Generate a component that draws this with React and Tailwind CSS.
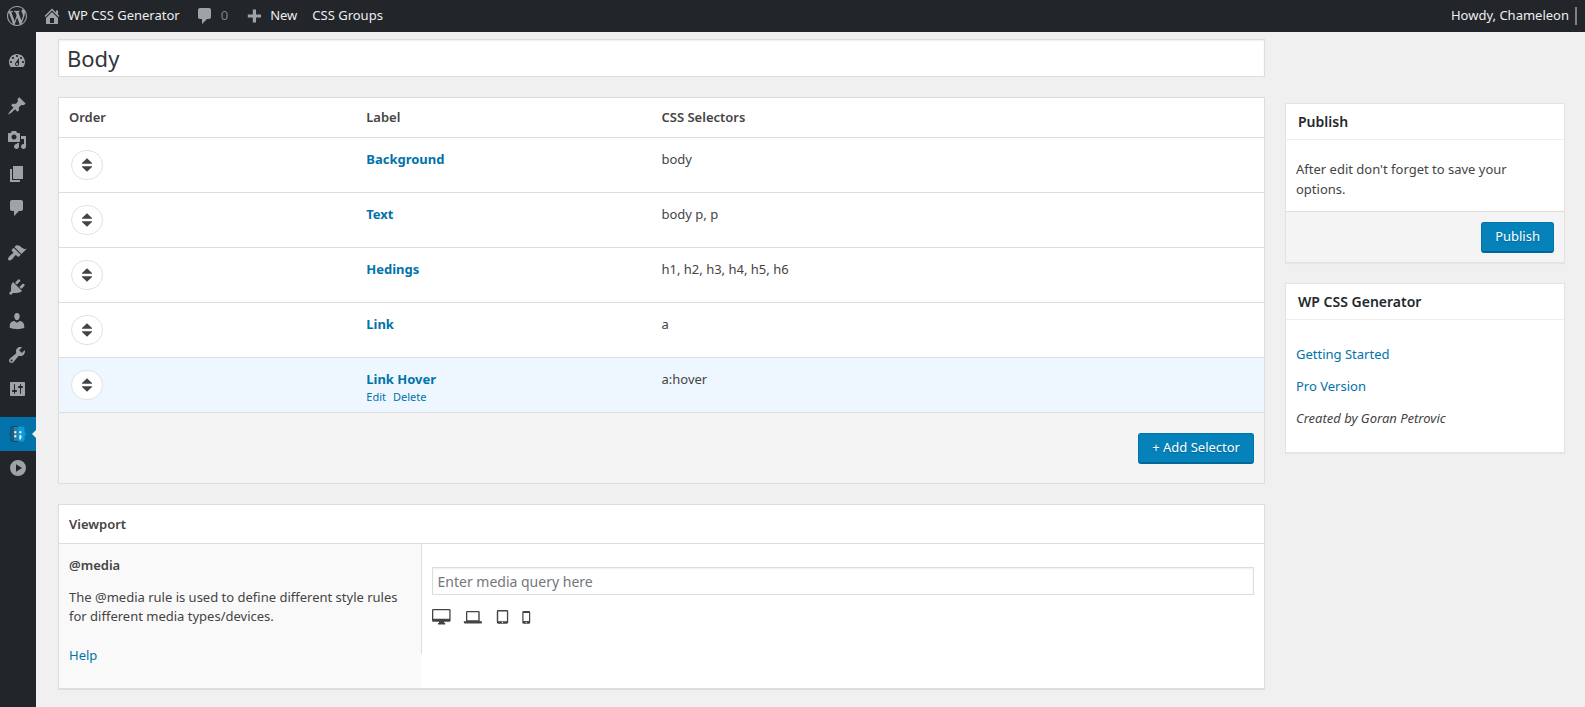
import React from "react";

const ICONS = {
  wordpress:
    "M20 10c0-5.51-4.49-10-10-10C4.48 0 0 4.49 0 10c0 5.52 4.48 10 10 10 5.51 0 10-4.48 10-10zM7.78 15.37L4.37 6.22c.55-.02 1.17-.08 1.17-.08.5-.06.44-1.13-.06-1.11 0 0-1.45.11-2.37.11-.18 0-.37 0-.58-.01C4.12 2.69 6.87 1.11 10 1.11c2.33 0 4.45.87 6.05 2.34-.68-.11-1.65.39-1.65 1.58 0 .74.45 1.36.9 2.1.35.61.55 1.36.55 2.46 0 1.49-1.4 5-1.4 5l-3.03-8.37c.54-.02.82-.17.82-.17.5-.05.44-1.25-.06-1.22 0 0-1.44.12-2.38.12-.87 0-2.33-.12-2.33-.12-.5-.03-.56 1.2-.06 1.22l.92.08 1.26 3.41zM17.41 10c.24-.64.74-1.87.43-4.25.7 1.29 1.05 2.71 1.05 4.25 0 3.29-1.73 6.24-4.4 7.78.97-2.59 1.94-5.2 2.92-7.78zM6.1 18.09C3.12 16.65 1.11 13.53 1.11 10c0-1.3.23-2.48.72-3.59C3.25 10.3 4.67 14.2 6.1 18.09zm4.03-6.63l2.58 6.98c-.86.29-1.76.45-2.71.45-.79 0-1.57-.11-2.29-.33.81-2.38 1.62-4.74 2.42-7.1z",
  home: "M16 8.5l1.53 1.53-1.06 1.06L10 4.6l-6.47 6.49-1.06-1.06L10 2.5l4 4v-2h2v4zm-6-2.46l6 5.99V18H4v-5.97zM12 17v-5H8v5h4z",
  comment:
    "M5 2h9c1.1 0 2 .9 2 2v7c0 1.1-.9 2-2 2h-2l-5 5v-5H5c-1.1 0-2-.9-2-2V4c0-1.1.9-2 2-2z",
  plus: "M17 8.4v3.2h-5v5H8.8v-5h-5V8.4h5v-5H12v5z",
  dashboard:
    "M3.76 16h12.48c1.1-1.37 1.76-3.11 1.76-5 0-4.42-3.58-8-8-8s-8 3.58-8 8c0 1.89.66 3.63 1.76 5zM10 4c.55 0 1 .45 1 1s-.45 1-1 1-1-.45-1-1 .45-1 1-1zM6 6c.55 0 1 .45 1 1s-.45 1-1 1-1-.45-1-1 .45-1 1-1zm8 0c.55 0 1 .45 1 1s-.45 1-1 1-1-.45-1-1 .45-1 1-1zm-5.37 5.55L12 7v6c0 1.1-.9 2-2 2s-2-.9-2-2c0-.57.24-1.08.63-1.45zM4 10c.55 0 1 .45 1 1s-.45 1-1 1-1-.45-1-1 .45-1 1-1zm12 0c.55 0 1 .45 1 1s-.45 1-1 1-1-.45-1-1 .45-1 1-1zm-5 3c0-.55-.45-1-1-1s-1 .45-1 1 .45 1 1 1 1-.45 1-1z",
  pin: "M10.44 3.02l1.82-1.82 6.36 6.35-1.83 1.82c-1.05-.68-2.48-.57-3.41.36l-.75.75c-.92.93-1.04 2.35-.35 3.41l-1.83 1.82-2.41-2.41-2.8 2.79c-.42.42-3.38 2.71-3.8 2.29s1.86-3.39 2.28-3.81l2.79-2.79L4.1 9.36l1.83-1.82c1.05.69 2.48.57 3.4-.36l.75-.75c.93-.92 1.05-2.35.36-3.41z",
  media:
    "M13 11V4c0-.55-.45-1-1-1h-1.67L9 1H5L3.67 3H2c-.55 0-1 .45-1 1v7c0 .55.45 1 1 1h10c.55 0 1-.45 1-1zM7 4.5c1.38 0 2.5 1.12 2.5 2.5S8.38 9.5 7 9.5 4.5 8.38 4.5 7 5.62 4.5 7 4.5zM14 6h5v10.5c0 1.38-1.12 2.5-2.5 2.5S14 17.88 14 16.5s1.12-2.5 2.5-2.5c.17 0 .34.02.5.05V9h-3V6zm-4 8.05V13h2v3.5c0 1.38-1.12 2.5-2.5 2.5S7 17.88 7 16.5 8.12 14 9.5 14c.17 0 .34.02.5.05z",
  page: "M6 15V2h10v13H6zm-1 1h8v2H3V5h2v11z",
  appearance:
    "M14.48 11.06L7.41 3.99l1.5-1.5c.5-.56 2.3-.47 3.51.32 1.21.8 1.43 1.28 2.91 2.1 1.18.64 2.45 1.26 4.45.85zm-.71.71L6.7 4.7 4.93 6.47c-.39.39-.39 1.02 0 1.41l1.06 1.06c.39.39.39 1.03 0 1.42-.6.6-1.43 1.11-2.21 1.69-.35.26-.7.53-1.01.84C1.43 14.23.4 16.08 1.4 17.07c.99 1 2.84-.03 4.18-1.36.31-.31.58-.66.85-1.02.57-.78 1.08-1.61 1.69-2.21.39-.39 1.02-.39 1.41 0l1.06 1.06c.39.39 1.02.39 1.41 0z",
  plugins:
    "M13.11 4.36L9.87 7.6 8 5.73l3.24-3.24c.35-.34 1.05-.2 1.56.32.52.51.66 1.21.31 1.55zm-8 1.77l.91-1.12 9.01 9.01-1.19.84c-.71.71-2.63 1.16-3.82 1.16H6.14L4.9 17.26c-.59.59-1.54.59-2.12 0-.59-.58-.59-1.53 0-2.12l1.24-1.24v-3.88c0-1.13.4-3.19 1.09-3.89zm7.26 3.97l3.24-3.24c.34-.35 1.04-.21 1.55.31.52.51.66 1.21.31 1.55l-3.24 3.25z",
  users:
    "M10 9.25c-2.27 0-2.73-3.44-2.73-3.44C7 4.02 7.82 2 9.97 2c2.16 0 2.98 2.02 2.71 3.81 0 0-.41 3.44-2.68 3.44zm0 2.57L12.72 10c2.39 0 4.52 2.33 4.52 4.53v2.49s-3.65 1.13-7.24 1.13c-3.65 0-7.24-1.13-7.24-1.13v-2.49c0-2.25 1.94-4.48 4.47-4.48z",
  tools:
    "M16.68 9.77c-1.34 1.34-3.3 1.67-4.95.99l-5.41 6.52c-.99.99-2.59.99-3.58 0s-.99-2.59 0-3.57l6.52-5.42c-.68-1.65-.35-3.61.99-4.95 1.28-1.28 3.12-1.62 4.72-1.06l-2.89 2.89 2.82 2.82 2.86-2.87c.53 1.58.18 3.39-1.08 4.65zM3.81 16.21c.4.39 1.04.39 1.43 0 .4-.4.4-1.04 0-1.43-.39-.4-1.03-.4-1.43 0-.39.39-.39 1.03 0 1.43z",
  settings:
    "M18 16V4c0-.55-.45-1-1-1H4c-.55 0-1 .45-1 1v12c0 .55.45 1 1 1h13c.55 0 1-.45 1-1zM8 11h1c.55 0 1 .45 1 1s-.45 1-1 1H8v1.5c0 .28-.22.5-.5.5s-.5-.22-.5-.5V13H6c-.55 0-1-.45-1-1s.45-1 1-1h1V5.5c0-.28.22-.5.5-.5s.5.22.5.5V11zm5-2h-1c-.55 0-1-.45-1-1s.45-1 1-1h1V5.5c0-.28.22-.5.5-.5s.5.22.5.5V7h1c.55 0 1 .45 1 1s-.45 1-1 1h-1v5.5c0 .28-.22.5-.5.5s-.5-.22-.5-.5V9z",
  play: "M11 2a8 8 0 1 0 0 16 8 8 0 0 0 0-16zM9 6.2l6 3.8-6 3.8z",
  sort: "M10 3.2l5 4.9v.7H5v-.7zM5 11.2h10v.7l-5 4.9-5-4.9z",
};

function Icon({ name, className = "size-5" }) {
  return (
    <svg viewBox="0 0 20 20" className={className} fill="currentColor" fillRule="evenodd" aria-hidden="true">
      <path d={ICONS[name]} />
    </svg>
  );
}

function GeneratorIcon() {
  return (
    <svg viewBox="0 0 20 20" className="size-5" aria-hidden="true">
      <path d="M6.2 2.5H11v15H6.2C4.700 17.500 4 16.800 4 15.500V12l-1.500-2L4 8V4.500c0-1.300.7-2 2.200-2z" fill="#1b5f86" stroke="#0d4566" strokeWidth=".9" />
      <path d="M7 3h4v14H7z" fill="#2b7fae" />
      <path d="M11 2.500h4.500c1.500 0 2.200.7 2.200 2V8l1.300 2-1.300 2v3.500c0 1.300-.7 2-2.200 2H11z" fill="#0b9bd7" stroke="#1383b5" strokeWidth=".6" />
      <path d="M7.300 7.200h2v2h-2zM7.300 11.200h2v2h-2zM12.400 7.200h2v2h-2zM12.400 11.200h2v2.600l-1 1.800h-1z" fill="#fff" />
    </svg>
  );
}

const MENU_GROUPS = [
  [["dashboard", "Dashboard"]],
  [
    ["pin", "Posts"],
    ["media", "Media"],
    ["page", "Pages"],
    ["comment", "Comments"],
  ],
  [
    ["appearance", "Appearance"],
    ["plugins", "Plugins"],
    ["users", "Users"],
    ["tools", "Tools"],
    ["settings", "Settings"],
  ],
  [
    ["generator", "WP CSS Generator"],
    ["play", "Collapse menu"],
  ],
];

const ROWS = [
  { label: "Background", css: "body" },
  { label: "Text", css: "body p, p" },
  { label: "Hedings", css: "h1, h2, h3, h4, h5, h6" },
  { label: "Link", css: "a" },
  { label: "Link Hover", css: "a:hover", active: true },
];

function AdminBar() {
  return (
    <header className="flex h-8 items-center bg-[#222529] pl-[7px] pr-2 text-[13px] text-[#eee]">
      <a href="#wordpress" aria-label="About WordPress" className="text-[#9ea3a8]">
        <Icon name="wordpress" />
      </a>
      <a href="#site" className="ml-[15px] flex items-center gap-1.5">
        <Icon name="home" className="size-5 text-[#9ea3a8]" />
        WP CSS Generator
      </a>
      <a href="#comments" aria-label="0 comments" className="ml-[15px] flex items-center gap-1.5 text-[#7d8287]">
        <Icon name="comment" className="size-5 text-[#9ea3a8]" />
        0
      </a>
      <a href="#new" className="ml-4 flex items-center gap-1.5">
        <Icon name="plus" className="size-5 text-[#9ea3a8]" />
        New
      </a>
      <a href="#groups" className="ml-[15px]">CSS Groups</a>
      <a href="#profile" className="ml-auto flex items-center gap-1.5">
        Howdy, Chameleon
        <span className="h-[18px] w-0.5 bg-[#7d8185]" />
      </a>
    </header>
  );
}

function SideMenu() {
  return (
    <nav aria-label="Main menu" className="flex w-9 shrink-0 flex-col gap-[11px] bg-[#222529] pt-3 text-[#9ea3a8]">
      {MENU_GROUPS.map((group, i) => (
        <ul key={i}>
          {group.map(([icon, label]) =>
            icon === "generator" ? (
              <li key={icon} className="relative">
                <a href="#generator" aria-label={label} className="flex h-[34px] items-center bg-[#0472aa] pl-[7px]">
                  <GeneratorIcon />
                </a>
                <svg viewBox="0 0 4 8" className="absolute right-0 top-[13px] h-2 w-1" aria-hidden="true">
                  <path d="M4 0v8L0 4z" fill="#f0f0f0" />
                </svg>
              </li>
            ) : (
              <li key={icon}>
                <a href={"#" + icon} aria-label={label} className="flex h-[34px] items-center pl-[7px]">
                  <Icon name={icon} />
                </a>
              </li>
            )
          )}
        </ul>
      ))}
    </nav>
  );
}

function PrimaryButton({ children }) {
  return (
    <button
      type="button"
      className="h-[31px] rounded-[3px] border border-[#0073aa] border-b-2 border-b-[#006799] bg-[#0682ba] px-[13px] text-[13px] text-white [text-shadow:0_1px_1px_#006799]"
    >
      {children}
    </button>
  );
}

function SelectorTable() {
  return (
    <section className="border border-[#ddd] bg-white">
      <table className="w-full table-fixed border-collapse text-left">
        <colgroup>
          <col className="w-[25.5%]" />
          <col className="w-[24.5%]" />
          <col />
        </colgroup>
        <thead>
          <tr className="h-[39px] border-b border-[#ddd]">
            <th className="pl-2.5 font-semibold">Order</th>
            <th className="font-semibold">Label</th>
            <th className="font-semibold">CSS Selectors</th>
          </tr>
        </thead>
        <tbody>
          {ROWS.map((row) => (
            <tr key={row.label} className={row.active ? "h-[55px] border-b border-[#ddd] bg-[#eef7ff]" : "h-[55px] border-b border-[#ddd]"}>
              <td className="pl-3 align-middle">
                <button
                  type="button"
                  aria-label={"Reorder " + row.label}
                  className="flex h-[30px] w-8 items-center justify-center rounded-full border border-[#e1e1e1] bg-white"
                >
                  <Icon name="sort" />
                </button>
              </td>
              <td className="pt-[11px] align-top">
                <a href="#selector" className="block font-bold leading-5 text-[#0073aa]">{row.label}</a>
                {row.active && (
                  <div className="flex gap-[7px] text-[11px] leading-4 text-[#0073aa]">
                    <a href="#edit">Edit</a>
                    <a href="#delete">Delete</a>
                  </div>
                )}
              </td>
              <td className="pt-[11px] align-top leading-5">{row.css}</td>
            </tr>
          ))}
        </tbody>
      </table>
      <div className="flex h-[70px] items-start justify-end bg-[#f4f4f4] px-2.5 pt-5">
        <PrimaryButton>+ Add Selector</PrimaryButton>
      </div>
    </section>
  );
}

function DeviceButton({ label, className, children }) {
  return (
    <button type="button" aria-label={label} className={className}>
      {children}
    </button>
  );
}

function Viewport() {
  return (
    <section className="border border-b-2 border-[#ddd] bg-white">
      <h2 className="border-b border-[#ddd] px-2.5 py-[9px] font-semibold leading-5">Viewport</h2>
      <div className="flex h-[144px]">
        <div className="w-[30%] shrink-0 bg-[#f9f9f9] px-2.5 pt-[11px]">
          <h3 className="font-semibold leading-5">@media</h3>
          <p className="mt-[13px] leading-[19px]">The @media rule is used to define different style rules for different media types/devices.</p>
          <p className="mt-[19px] leading-5">
            <a href="#help" className="text-[#0073aa]">Help</a>
          </p>
        </div>
        <div className="h-[110px] grow border-l border-[#ddd] px-2.5 pt-[23px]">
          <input
            type="text"
            aria-label="Media query"
            placeholder="Enter media query here"
            className="block h-7 w-full border border-[#ddd] bg-white px-[5px] pt-px text-sm shadow-[inset_0_1px_2px_rgba(0,0,0,0.07)] placeholder:text-[#72777c]"
          />
          <div className="mt-3 flex h-5 items-center">
            <DeviceButton label="Desktop" className="mr-[11px]">
              <svg viewBox="0 0 20 20" className="size-5" aria-hidden="true">
                <path fill="#444" fillRule="evenodd" d="M1.200 2h16.200q1.200 0 1.200 1.200v10.300q0 1.200-1.200 1.200h-5.200v1.300h1v1.500H6V16h1v-1.300H1.200Q0 14.700 0 13.500V3.200Q0 2 1.200 2zM1.300 3.300v8.400h16V3.300z" />
              </svg>
            </DeviceButton>
            <DeviceButton label="Laptop" className="mr-2.5">
              <svg viewBox="0 0 20 20" className="size-5" aria-hidden="true">
                <path fill="#444" fillRule="evenodd" d="M4.200 4h11.300q1.200 0 1.200 1.200v9.100h2.300v1q0 1.200-1.200 1.200H2q-1.200 0-1.200-1.200v-1h2.200V5.200Q3 4 4.200 4zM4.300 5.300v8h11v-8z" />
              </svg>
            </DeviceButton>
            <DeviceButton label="Tablet" className="mr-1">
              <svg viewBox="0 0 20 20" className="size-5" aria-hidden="true">
                <path fill="#444" fillRule="evenodd" d="M5.200 3h8.600q1.400 0 1.400 1.400v10.900q0 1.400-1.400 1.400H5.200q-1.400 0-1.400-1.400V4.400Q3.800 3 5.200 3zM5.200 4.400v9.900h8.700V4.400z" />
                <circle cx="9.500" cy="15.400" r=".6" fill="#fff" />
              </svg>
            </DeviceButton>
            <DeviceButton label="Phone">
              <svg viewBox="0 0 20 20" className="size-5" aria-hidden="true">
                <path fill="#444" fillRule="evenodd" d="M6.600 4h5.300q1.300 0 1.300 1.300v10.100q0 1.300-1.300 1.300H6.600q-1.300 0-1.300-1.300V5.300Q5.300 4 6.600 4zM6.500 6v7.900h5.500V6z" />
                <circle cx="9.200" cy="15.300" r=".6" fill="#fff" />
              </svg>
            </DeviceButton>
          </div>
        </div>
      </div>
    </section>
  );
}

function SidePanel({ title, children }) {
  return (
    <section className="border border-[#e3e3e3] bg-white shadow-[0_1px_1px_rgba(0,0,0,0.04)]">
      <h2 className="border-b border-[#eee] px-3 pb-[7px] pt-2 text-sm font-semibold leading-5 text-[#23282d]">{title}</h2>
      {children}
    </section>
  );
}

export default function App() {
  return (
    <div className="flex min-h-screen flex-col bg-[#f0f0f0] font-['Noto_Sans',sans-serif] text-[13px] text-[#444]">
      <AdminBar />
      <div className="flex grow">
        <SideMenu />
        <main className="flex grow items-start gap-5 pb-4 pl-[22px] pr-5 pt-[7px]">
          <div className="flex min-w-0 grow flex-col gap-5">
            <input
              type="text"
              aria-label="Group title"
              defaultValue="Body"
              className="block h-[38px] w-full border border-[#ddd] bg-white px-2 text-[22px] text-[#32373c] shadow-[inset_0_1px_2px_rgba(0,0,0,0.07)]"
            />
            <SelectorTable />
            <Viewport />
          </div>
          <aside className="flex w-[280px] shrink-0 flex-col gap-5 pt-16">
            <SidePanel title="Publish">
              <p className="border-b border-[#ddd] px-2.5 pb-3 pt-[19px] leading-5">
                After edit don't forget to save your options.
              </p>
              <div className="flex justify-end bg-[#f4f4f4] px-2.5 pb-[9px] pt-2.5">
                <PrimaryButton>Publish</PrimaryButton>
              </div>
            </SidePanel>
            <SidePanel title="WP CSS Generator">
              <div className="flex flex-col gap-3 px-2.5 pb-6 pt-6 leading-5">
                <a href="#start" className="text-[#0073aa]">Getting Started</a>
                <a href="#pro" className="text-[#0073aa]">Pro Version</a>
                <em>Created by Goran Petrovic</em>
              </div>
            </SidePanel>
          </aside>
        </main>
      </div>
    </div>
  );
}
